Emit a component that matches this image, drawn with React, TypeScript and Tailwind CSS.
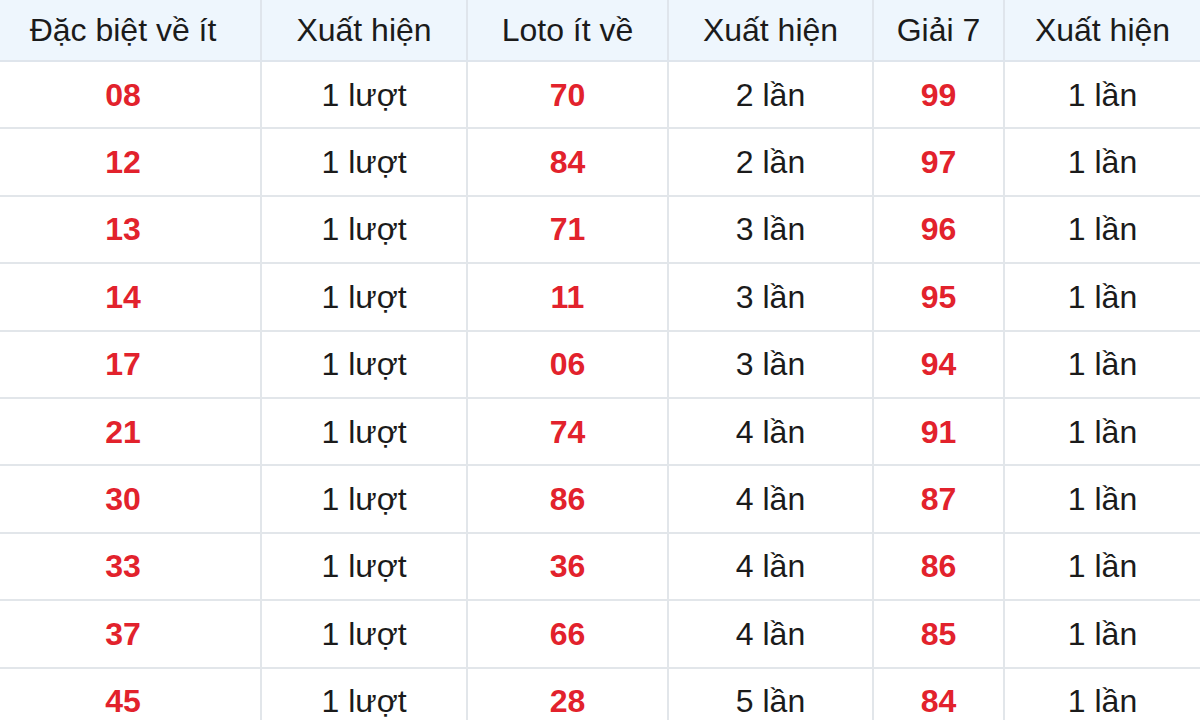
import React from "react";

const headers = ["Đặc biệt về ít", "Xuất hiện", "Loto ít về", "Xuất hiện", "Giải 7", "Xuất hiện"];

// [đặc biệt, lượt, loto, lần, giải 7, lần]
const rows: [string, string, string, string, string, string][] = [
  ["08", "1 lượt", "70", "2 lần", "99", "1 lần"],
  ["12", "1 lượt", "84", "2 lần", "97", "1 lần"],
  ["13", "1 lượt", "71", "3 lần", "96", "1 lần"],
  ["14", "1 lượt", "11", "3 lần", "95", "1 lần"],
  ["17", "1 lượt", "06", "3 lần", "94", "1 lần"],
  ["21", "1 lượt", "74", "4 lần", "91", "1 lần"],
  ["30", "1 lượt", "86", "4 lần", "87", "1 lần"],
  ["33", "1 lượt", "36", "4 lần", "86", "1 lần"],
  ["37", "1 lượt", "66", "4 lần", "85", "1 lần"],
  ["45", "1 lượt", "28", "5 lần", "84", "1 lần"],
];

const cols = "grid grid-cols-[262px_206px_201px_205px_131px_195px]";

const App = () => {
  return (
    <div className="w-[1200px] h-[720px] overflow-hidden bg-white font-['Liberation_Sans',Arial,sans-serif]">
      <div className={`${cols} h-[62px] bg-[#eef6fd] border-b-2 border-[#dfe5ec]`}>
        {headers.map((h, i) => (
          <div
            key={i}
            className="flex items-center justify-center first:pr-[14px] text-[32px] text-[#1b1b1b] border-r-2 border-[#dfe5ec] last:border-r-0"
          >
            {h}
          </div>
        ))}
      </div>
      {rows.map((r, ri) => (
        <div key={ri} className={`${cols} h-[67.4px] border-b-2 border-[#e2e6ea]`}>
          {r.map((c, ci) => (
            <div
              key={ci}
              className={
                "flex items-center justify-center first:pr-[14px] text-[32px] border-r-2 border-[#e2e6ea] last:border-r-0 " +
                (ci % 2 === 0 ? "font-bold text-[#e2222c]" : "text-[#1b1b1b]")
              }
            >
              {c}
            </div>
          ))}
        </div>
      ))}
    </div>
  );
};

export default App;
